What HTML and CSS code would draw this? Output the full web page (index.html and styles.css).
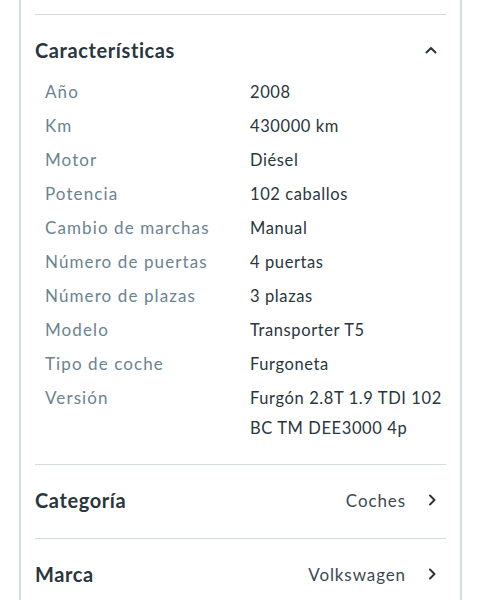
FILE: index.html
```html
<!DOCTYPE html>
<html lang="es">
<head>
<meta charset="utf-8">
<link rel="stylesheet" href="styles.css">
</head>
<body>
<div class="card">
  <div class="top-spacer"></div>
  <section class="specs">
    <div class="specs-head">
      <h2 class="title">Características</h2>
      <svg class="icon" viewBox="0 0 24 24" width="24" height="24"><path d="M7.5 14.5 L12 10 L16.5 14.5" fill="none" stroke="#29363d" stroke-width="2" stroke-linecap="round" stroke-linejoin="round"/></svg>
    </div>
    <dl class="spec-list">
      <dt>Año</dt><dd>2008</dd>
      <dt>Km</dt><dd>430000 km</dd>
      <dt>Motor</dt><dd>Diésel</dd>
      <dt>Potencia</dt><dd>102 caballos</dd>
      <dt>Cambio de marchas</dt><dd>Manual</dd>
      <dt>Número de puertas</dt><dd>4 puertas</dd>
      <dt>Número de plazas</dt><dd>3 plazas</dd>
      <dt>Modelo</dt><dd>Transporter T5</dd>
      <dt>Tipo de coche</dt><dd>Furgoneta</dd>
      <dt>Versión</dt><dd>Furgón 2.8T 1.9 TDI 102 BC TM DEE3000 4p</dd>
    </dl>
  </section>
  <a class="link-row">
    <span class="title">Categoría</span>
    <span class="link-value">Coches</span>
    <svg class="icon" viewBox="0 0 24 24" width="24" height="24"><path d="M10 7.5 L14.5 12 L10 16.5" fill="none" stroke="#29363d" stroke-width="2" stroke-linecap="round" stroke-linejoin="round"/></svg>
  </a>
  <a class="link-row">
    <span class="title">Marca</span>
    <span class="link-value">Volkswagen</span>
    <svg class="icon" viewBox="0 0 24 24" width="24" height="24"><path d="M10 7.5 L14.5 12 L10 16.5" fill="none" stroke="#29363d" stroke-width="2" stroke-linecap="round" stroke-linejoin="round"/></svg>
  </a>
</div>
</body>
</html>
```
FILE: styles.css
```css
html, body {
  margin: 0;
  padding: 0;
  background: #ffffff;
}
body {
  font-family: "Lato", "Liberation Sans", sans-serif;
  color: #29363d;
  overflow: hidden;
}
.card {
  margin: 0 19px;
  border: 2px solid #d5dde1;
  border-top: none;
  border-radius: 0 0 12px 12px;
  padding: 0 14px;
  min-height: 640px;
}
.top-spacer {
  height: 14px;
  border-bottom: 1px solid #d3dbe0;
}
.specs {
  border-bottom: 1px solid #d3dbe0;
  padding-bottom: 21px;
}
.specs-head {
  display: flex;
  align-items: center;
  justify-content: space-between;
  padding: 22px 3px 14px 0;
  height: 26px;
  box-sizing: content-box;
}
.title {
  margin: 0;
  font-size: 20px;
  font-weight: 700;
  line-height: 26px;
  color: #29363d;
  letter-spacing: 0.6px;
}
.icon {
  display: block;
  flex: none;
}
.spec-list {
  margin: 0;
  padding: 0 0 0 10px;
  display: grid;
  grid-template-columns: 205px 1fr;
  row-gap: 4px;
  font-size: 16.5px;
  line-height: 30px;
  letter-spacing: 0.6px;
}
.spec-list dt {
  color: #6b8390;
  font-size: 17px;
  letter-spacing: 1.1px;
}
.spec-list dd {
  margin: 0;
  color: #29363d;
}
.link-row {
  display: flex;
  align-items: center;
  box-sizing: border-box;
  height: 74px;
  padding: 0 2px 3px 0;
  border-bottom: 1px solid #d3dbe0;
}
.link-row .title {
  flex: 1;
}
.link-value {
  font-size: 17px;
  letter-spacing: 0.9px;
  color: #3b4a52;
  margin-right: 14px;
}
```
